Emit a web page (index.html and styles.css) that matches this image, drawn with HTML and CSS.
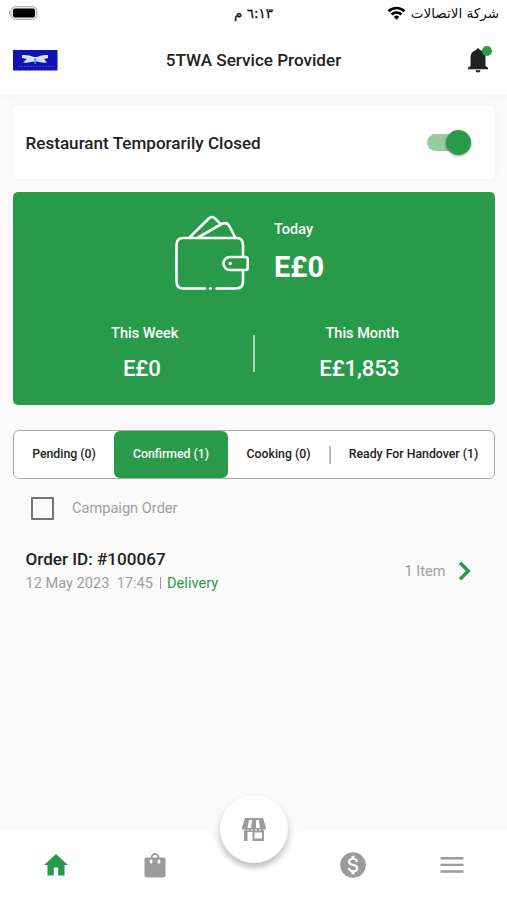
FILE: index.html
```html
<!DOCTYPE html>
<html lang="en">
<head>
<meta charset="utf-8">
<meta name="viewport" content="width=device-width, initial-scale=1">
<title>5TWA Service Provider</title>
<link rel="stylesheet" href="styles.css">
</head>
<body>
<div class="app">
  <div class="status">
    <svg class="battery" width="32" height="16" viewBox="0 0 32 16"><path d="M2 5.500a2.500 2.500 0 0 0 0 4z" fill="#999"/><rect x="3" y="1.500" width="26" height="13" rx="4.500" fill="#e6e6e6" stroke="#aaa"/><rect x="5" y="3.500" width="22" height="9" rx="2" fill="#000"/></svg>
    <span class="time" dir="rtl">٦:١٣ م</span>
    <div class="carrier">
      <svg width="19" height="15" viewBox="0 0 20 15" fill="none" stroke="#000" stroke-width="2.8"><path d="M1.6 5.1a12 12 0 0 1 16.8 0M4.8 8.6a7.4 7.4 0 0 1 10.400 0"/><path d="M7.2 11.1a4 4 0 0 1 5.6 0L10 14z" fill="#000" stroke="none"/></svg>
      <span dir="rtl">شركة الاتصالات</span>
    </div>
  </div>
  <header class="header">
    <svg class="logo" width="45" height="21" viewBox="0 0 45 21"><rect width="44.500" height="20.500" fill="#1212b4"/><path d="M9 5q7-.5 12 2h3q5-2.500 11-2v3l-4 1 3 3.500q-6 .5-10-1h-3q-5 1.500-11 1l4-3.500-5-1z" fill="#d5e3f5"/><path d="M21 8l2.500 1-1 5h-1z" fill="#4ca6e4"/><path d="M5 16.500h37" stroke="#4545c9" stroke-dasharray="2 1"/></svg>
    <h1 class="title">5TWA Service Provider</h1>
    <div class="bell">
      <svg width="22" height="26" viewBox="0 0 22 26" fill="#222"><path d="M11 1.200a2 2 0 0 1 1.800 1.800c4 1.200 5.700 4 5.700 8v8l2.500 1.800v1.500H1v-1.500L3.500 19v-8c0-4 1.700-6.800 5.700-8A2 2 0 0 1 11 1.200zM8.500 23.200h5a2.500 2.200 0 0 1-5 0z"/></svg>
      <i class="dot"></i>
    </div>
  </header>
  <main class="content">
    <section class="closed">
      <span>Restaurant Temporarily Closed</span>
      <div class="switch"><i class="thumb"></i></div>
    </section>
    <section class="earnings">
      <div class="today">
        <svg width="76" height="76" viewBox="0 0 76 76" fill="none" stroke="#fff" stroke-width="2.6" stroke-linecap="round" stroke-linejoin="round"><path d="M31 73.500H9q-6.500 0-6.500-7V30q0-7 7-7h53q6.500 0 6.500 7v12M69 55v11.500q0 7-7 7H42.500M36 73.500h.8M16 22L34.500 3.800q3.500-3.500 7 0L47 9.500M25 22L47.500 9q5.500-2.500 8 2.500L61 22M71.500 42H56a6.500 6.500 0 0 0 0 13h15.500q2.200 0 2.200-2.200v-8.600q0-2.200-2.200-2.200z"/><circle cx="56.300" cy="48.500" r="1.700" fill="#fff" stroke="none"/></svg>
        <div class="today-text"><span class="label">Today</span><strong>E£0</strong></div>
      </div>
      <div class="periods">
        <div class="period"><span class="label">This Week</span><span class="amount">E£0</span></div>
        <i class="rule"></i>
        <div class="period"><span class="label">This Month</span><span class="amount">E£1,853</span></div>
      </div>
    </section>
    <nav class="tabs">
      <span class="tab pending">Pending (0)</span>
      <span class="tab confirmed">Confirmed (1)</span>
      <span class="tab cooking">Cooking (0)</span>
      <i class="tab-rule"></i>
      <span class="tab ready">Ready For Handover (1)</span>
    </nav>
    <div class="campaign"><i class="box"></i><span>Campaign Order</span></div>
    <article class="order">
      <div class="order-main">
        <h2>Order ID: #100067</h2>
        <p><span class="date">12 May 2023&nbsp; 17:45</span><i class="sep"></i><span class="delivery">Delivery</span></p>
      </div>
      <span class="items">1 Item</span>
      <svg width="14" height="20" viewBox="0 0 14 20" fill="none" stroke="#299a49" stroke-width="3.400"><path d="M2 1.800l8.300 8.200L2 18.200"/></svg>
    </article>
  </main>
  <footer class="bottom">
    <svg class="bar" viewBox="0 0 507 70" fill="#fff"><path d="M0 0H201C208 0 212 3 214 10C219 27 235 39 254 39S289 27 294 10C296 3 300 0 307 0H507V70H0z"/></svg>
    <div class="nav">
      <svg width="26" height="24" viewBox="0 0 26 24" fill="#299a49"><path d="M13 1L1 12h3.500v10.500h6.300v-8h4.400v8h6.300V12H25z"/></svg>
      <svg width="24" height="28" viewBox="0 0 24 28"><path d="M3.500 6.500h4.100a4.400 4.400 0 0 1 8.800 0h4.100Q22.500 6.500 22.500 8.500v15.500q0 2.500-2.500 2.500H4Q1.500 26.500 1.500 24V8.500q0-2 2-2zM9.500 6.500h5a2.500 2.500 0 0 0-5 0z" fill="#9b9b9b"/><rect x="6.800" y="8.500" width="2.600" height="4" rx="1" fill="#fff"/><rect x="14.600" y="8.500" width="2.600" height="4" rx="1" fill="#fff"/></svg>
      <span></span>
      <svg width="28" height="28" viewBox="0 0 24 24" fill="#9b9b9b"><path d="M12 1C5.920 1 1 5.920 1 12s4.920 11 11 11 11-4.920 11-11S18.080 1 12 1zm1.410 17.090V20h-2.670v-1.930c-1.710-.36-3.160-1.460-3.270-3.400h1.960c.1 1.050.82 1.870 2.650 1.870 1.960 0 2.400-.98 2.400-1.590 0-.83-.44-1.610-2.670-2.140-2.480-.6-4.180-1.620-4.180-3.670 0-1.720 1.390-2.840 3.110-3.210V4h2.670v1.950c1.860.45 2.790 1.860 2.850 3.390H14.300c-.05-1.110-.64-1.870-2.220-1.870-1.500 0-2.400.68-2.400 1.640 0 .84.650 1.390 2.670 1.910s4.180 1.390 4.180 3.910c-.01 1.830-1.380 2.830-3.120 3.160z"/></svg>
      <svg width="24" height="18" viewBox="0 0 24 18" fill="#9b9b9b"><path d="M.5 1h23v2.400H.5zM.5 7.700h23v2.400H.5zM.5 14.300h23v2.400H.5z"/></svg>
    </div>
    <div class="fab">
      <svg width="26" height="25" viewBox="0 0 26 25"><path fill-rule="evenodd" d="M4 1h18l3 9.500q0 2.500-2 3V24H11.500V15H6.500V24H3V13.500Q1 13 1 10.500zM8 3L6.500 11H10L11 3zM15 3v8h4L18 3zM13.500 15.500v6H21v-6z" fill="#9b9b9b"/><path d="M2 13h22" stroke="#fff" stroke-width="1" stroke-dasharray="2 2"/></svg>
    </div>
  </footer>
</div>
</body>
</html>
```

FILE: styles.css
```css
* { box-sizing: border-box; }
body { margin: 0; background: #fafafa; color: #222; font-family: Roboto, "Noto Sans", "DejaVu Sans", sans-serif; }
svg { display: block; flex: none; }
.app { width: 507px; height: 900px; display: flex; flex-direction: column; overflow: hidden; }
.status { height: 26px; display: grid; grid-template-columns: 1fr auto 1fr; padding: 0 8px; align-items: center; background: #fff; color: #111; font: 13.500px/26px "DejaVu Sans", sans-serif; }
.time { -webkit-text-stroke: .3px #111; }
.carrier { display: flex; align-items: center; justify-content: flex-end; gap: 5px; }
.header { height: 68px; display: grid; grid-template-columns: 1fr auto 1fr; align-items: center; padding: 0 18px; background: #fff; box-shadow: 0 4px 5px #00000005; }
.logo { margin-left: -5px; }
.title { margin: 0 0 1px; font-size: 17.100px; font-weight: 500; }
.bell { position: relative; justify-self: end; }
.dot { position: absolute; right: -3px; top: -1px; width: 10px; height: 10px; border-radius: 50%; background: #299a49; }
.content { flex: 1; padding: 12px 12px 0 13px; }
.closed { height: 73px; border-radius: 5px; background: #fff; display: flex; align-items: center; justify-content: space-between; padding: 0 24.500px 0 12.500px; font-size: 17.100px; font-weight: 500; box-shadow: 0 0 8px #0000000a; }
.switch { width: 44px; height: 17px; border-radius: 9px; background: #94cca4; display: flex; align-items: center; justify-content: flex-end; }
.thumb { width: 25px; height: 25px; border-radius: 50%; background: #299a49; box-shadow: 0 1px 3px #0006; }
.earnings { height: 213px; margin-top: 13px; border-radius: 5px; background: #299a49; color: #fff; display: flex; flex-direction: column; }
.today { display: flex; gap: 24px; padding: 23px 0 0 161px; }
.today-text { display: flex; flex-direction: column; padding-top: 6px; }
.label { font-size: 14.500px; line-height: 18px; font-weight: 500; }
.today-text strong { font-size: 29px; line-height: 34px; margin-top: 11px; font-weight: 700; }
.periods { display: flex; align-items: center; margin-top: 34px; }
.period { flex: 1; display: flex; flex-direction: column; align-items: center; }
.period:first-child { padding-left: 24px; }
.period:last-child { padding-right: 25px; }
.amount { font-size: 22.200px; line-height: 28px; margin-top: 11px; font-weight: 500; letter-spacing: -.15px; }
.period .amount { transform: translateX(-3px); }
.rule { width: 2px; height: 37px; background: #add8b8; }
.tabs { height: 49px; margin-top: 25px; display: flex; align-items: center; border: 1px solid #aaa; border-radius: 6px; background: #fff; font-size: 12.300px; font-weight: 500; line-height: 46px; }
.tab { text-align: center; white-space: nowrap; height: 47px; }
.pending { width: 100px; }
.confirmed { width: 114px; border-radius: 6px; background: #299a49; color: #fff; }
.cooking { width: 101px; }
.tab-rule { width: 2px; height: 18px; background: #bbb; }
.ready { flex: 1; padding-left: 2px; }
.campaign { display: flex; align-items: center; gap: 18px; margin: 17px 0 0 18px; height: 24px; font-size: 14.600px; color: #a0a0a0; }
.box { width: 23px; height: 23px; border: 2px solid #757575; border-radius: 1px; }
.order { display: flex; align-items: center; padding: 0 23.500px 0 12.500px; margin-top: 28px; height: 46px; }
.order-main { flex: 1; }
.order h2 { margin: 0; font-size: 17.100px; line-height: 22px; font-weight: 500; }
.order p { margin: 2px 0 0; display: flex; align-items: center; font-size: 14.600px; line-height: 22px; color: #a0a0a0; }
.sep { width: 1px; height: 12px; margin: 0 6.500px; background: #999; }
.delivery { color: #299a49; }
.items { margin-right: 12px; font-size: 14.600px; color: #a0a0a0; }
.bottom { height: 70px; position: relative; }
.bar { width: 507px; height: 70px; }
.nav { position: absolute; inset: 0; display: grid; grid-template-columns: repeat(5, 99px); justify-content: center; justify-items: center; align-items: center; }
.fab { position: absolute; left: 220px; top: -35px; width: 68px; height: 68px; border-radius: 50%; background: #fff; display: flex; align-items: center; justify-content: center; box-shadow: 0 4px 6px #00000040; }
```
